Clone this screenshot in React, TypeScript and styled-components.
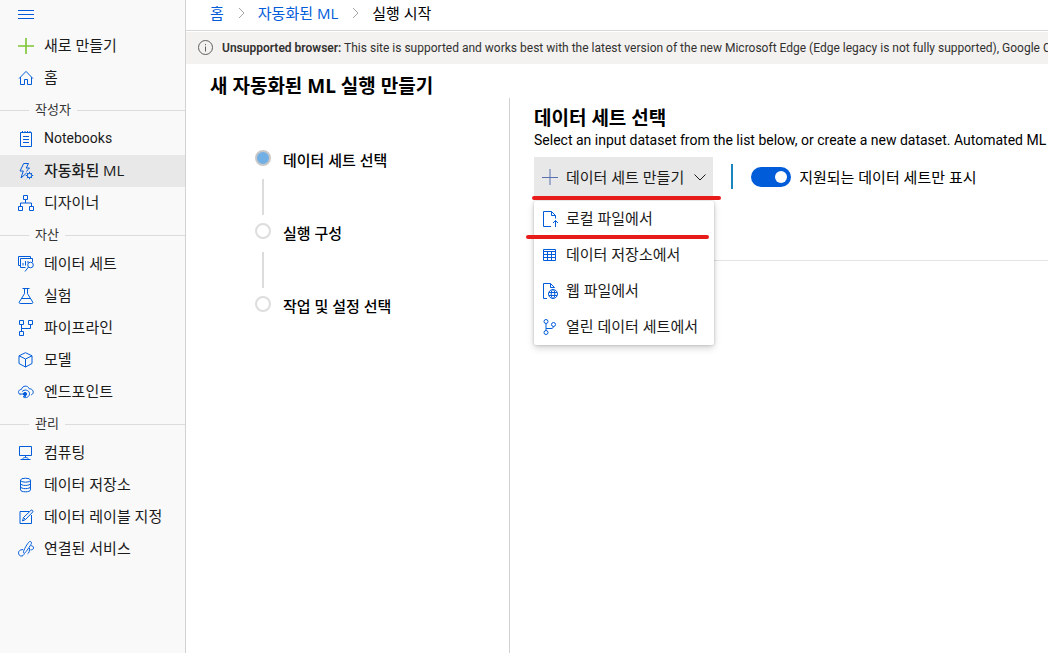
import React, { useState } from "react";
import styled, { createGlobalStyle } from "styled-components";

const blue = "#015cda";
const latinFont = `Roboto, "Open Sans", sans-serif`;

const GlobalStyle = createGlobalStyle`
  *, *::before, *::after { box-sizing: border-box; }
  body {
    margin: 0;
    background: #fff;
    color: #000;
    font-family: "Open Sans", "Noto Sans CJK KR", sans-serif;
    font-size: 15px;
    line-height: 20px;
  }
  button, input { font: inherit; }
`;

const Shell = styled.div`
  display: flex;
  min-height: 100vh;
`;

const Sidebar = styled.nav`
  flex: 0 0 186px;
  background: #f9f9f9;
  border-right: 1px solid #d2d2d2;
`;

const MenuToggle = styled.button`
  display: flex;
  align-items: center;
  width: 100%;
  height: 30px;
  padding: 0 18px;
  border: 0;
  background: none;
  color: ${blue};
`;

const NavList = styled.ul`
  list-style: none;
  margin: 0;
  padding: 0;
`;

const NavLink = styled.a<{ $active?: boolean; $latin?: boolean }>`
  display: flex;
  align-items: center;
  gap: 10px;
  height: 32px;
  padding: 0 18px;
  color: #1b1b1b;
  text-decoration: none;
  white-space: nowrap;
  background: ${(p) => (p.$active ? "#e8e8e8" : "transparent")};
  font-weight: ${(p) => (p.$active ? 500 : 400)};
  ${(p) => p.$latin && `font-family: ${latinFont}; font-size: 14px;`}
  svg { color: ${blue}; }
`;

const Label = styled.span`
  padding-bottom: 2px;
`;

const GroupTitle = styled.h2`
  display: flex;
  align-items: center;
  gap: 6px;
  height: 29px;
  margin: 0;
  padding-top: 4px;
  font-size: 13px;
  font-weight: 400;
  color: #333;
  &::before, &::after {
    content: "";
    height: 1px;
    background: #dcdcdc;
  }
  &::before { width: 29px; }
  &::after { flex: 1; }
  ${Label} { padding-bottom: 4px; }
`;

const Icon = styled.svg.attrs({ viewBox: "0 0 16 16", width: 16, height: 16, "aria-hidden": true })`
  flex: none;
  overflow: visible;
  fill: none;
  stroke: currentColor;
  stroke-width: 1;
`;

const Page = styled.div`
  flex: 1;
  min-width: 0;
  display: flex;
  flex-direction: column;
`;

const Breadcrumb = styled.nav`
  display: flex;
  align-items: center;
  gap: 9px;
  height: 31px;
  padding: 0 24px 4px;
  border-bottom: 1px solid #d6d6d6;
  svg { color: #a5a5a5; }
  a { color: ${blue}; text-decoration: none; }
`;

const Banner = styled.div`
  display: flex;
  align-items: center;
  gap: 8px;
  height: 32px;
  margin-top: 1px;
  padding-left: 12px;
  overflow: hidden;
  white-space: nowrap;
  background: #f3f2f1;
  color: #323130;
  font-family: ${latinFont};
  font-size: 12px;
  svg { color: #605e5c; }
  strong { font-weight: 600; }
`;

const PageTitle = styled.h1`
  margin: 0;
  padding: 10px 24px 0;
  font-size: 19px;
  line-height: 24px;
  font-weight: 700;
`;

const Body = styled.div`
  flex: 1;
  display: flex;
`;

const Steps = styled.ol`
  flex: 0 0 324px;
  list-style: none;
  margin: 0;
  padding: 52px 24px 0 69px;
  border-right: 1px solid #d2d2d2;
`;

const Step = styled.li`
  display: grid;
  grid-template-columns: 16px 1fr;
  column-gap: 12px;
  height: 73px;
  font-weight: 500;
`;

const StepTrack = styled.div`
  display: flex;
  flex-direction: column;
  align-items: center;
  gap: 13px;
`;

const StepDot = styled.span<{ $current?: boolean }>`
  width: 16px;
  height: 16px;
  border: 2px solid ${(p) => (p.$current ? "#c8c8c8" : "#dddddd")};
  border-radius: 50%;
  background: ${(p) => (p.$current ? "#71afe5" : "#fff")};
`;

const StepLine = styled.span`
  width: 2px;
  height: 36px;
  background: #dcdcdc;
`;

const Content = styled.main`
  flex: 1;
  min-width: 0;
  padding: 8px 0 0 24px;
  overflow: hidden;
`;

const SectionTitle = styled.h2`
  margin: 0;
  font-size: 19px;
  line-height: 24px;
  font-weight: 700;
`;

const Lead = styled.p`
  margin: 0;
  padding-bottom: 7px;
  font-family: ${latinFont};
  font-size: 14px;
  white-space: nowrap;
`;

const Toolbar = styled.div`
  display: flex;
  align-items: center;
  height: 104px;
  padding-bottom: 64px;
  border-bottom: 1px solid #e3e3e3;
  white-space: nowrap;
`;

const Dropdown = styled.div`
  position: relative;
`;

const CreateButton = styled.button`
  display: flex;
  align-items: center;
  gap: 8px;
  height: 40px;
  padding: 0 5px 0 8px;
  border: 0;
  background: #e8e8e8;
  color: #1b1b1b;
  white-space: nowrap;
`;

const PlusIcon = styled(Icon)`
  color: #5a6fae;
`;

const Menu = styled.ul`
  position: absolute;
  top: 44px;
  left: 0;
  width: 180px;
  margin: 0;
  padding: 0;
  list-style: none;
  background: #fff;
  border-radius: 2px;
  box-shadow: 0 3px 7px rgba(0, 0, 0, 0.18), 0 0 3px rgba(0, 0, 0, 0.2);
`;

const MenuItem = styled.button`
  display: flex;
  align-items: center;
  gap: 8px;
  width: 100%;
  height: 36px;
  padding: 0 8px;
  border: 0;
  background: none;
  color: #1b1b1b;
  white-space: nowrap;
  svg { color: ${blue}; }
`;

const Marker = styled.span<{ $top: number; $left: number; $width: number }>`
  position: absolute;
  top: ${(p) => p.$top}px;
  left: ${(p) => p.$left}px;
  width: ${(p) => p.$width}px;
  height: 4px;
  border-radius: 2px;
  background: #e81b1b;
`;

const Separator = styled.span`
  width: 2px;
  height: 25px;
  margin: 0 18px;
  background: #1a86bd;
`;

const SwitchLabel = styled.label`
  display: flex;
  align-items: center;
  gap: 8px;
`;

const Switch = styled.input`
  appearance: none;
  display: flex;
  align-items: center;
  width: 40px;
  height: 20px;
  margin: 0;
  padding: 0 4px;
  border-radius: 10px;
  background: #8a8886;
  &::before {
    content: "";
    width: 12px;
    height: 12px;
    border-radius: 50%;
    background: #fff;
  }
  &:checked { background: ${blue}; justify-content: flex-end; }
`;

const icons: Record<string, React.ReactNode> = {
  menu: <path d="M0 3.5h16M0 7.5h16M0 11.5h16" />,
  add: <path d="M8 0v16M0 8h16" stroke="#7cc534" strokeWidth="1.6" />,
  home: <path d="M1 8.6 8 1.4l7 7.2M2.5 7.2v7.3h4v-5h3v5h4V7.2" />,
  notebook: <path d="M2.5 1.5h11v14h-11zM4.5 0v2M7 0v2M9.5 0v2M12 0v2M5 5.5h6M5 8.5h6M5 11.5h6" />,
  automl: (
    <>
      <path d="M8.5 8.5 10 6.5 11.5 5H8.2l2.3-4.5H5.7L2 8h3.3L3 15l5.6-5" />
      <circle cx="11.5" cy="12.5" r="2.2" />
      <path d="M11.5 8.8v1.5M11.5 14.7v1.5M7.8 12.5h1.5M13.7 12.5h1.5M8.9 9.9l1 1M13.1 14.1l1 1M14.1 9.9l-1 1M9.9 14.1l-1 1" />
    </>
  ),
  designer: <path d="M5.5.5h4v4h-4zM.5 11.5h4v4h-4zM11.5 11.5h4v4h-4zM7.5 4.5v3.5M2.5 11.5v-3.5h11v3.5" />,
  dataset: (
    <>
      <path d="M2 9.5H.5v-9h12V2M7.500 11.500h-5v-9h12V6M5 9.500V7M7.500 9.500V5M10 7V5" />
      <circle cx="12.5" cy="9" r="2.8" />
      <path d="m10.500 11-3.500 4.500" />
    </>
  ),
  flask: <path d="M4.500.5h7M6.500.5v5.200L1.300 14c-.4.800 0 1.500.8 1.500h11.800c.8 0 1.200-.7.8-1.500L9.500 5.700V.5M3.700 10.500h8.600" />,
  pipeline: <path d="M1.500.5h4v4h-4zM10.500.5h4v4h-4zM1.500 11.500h4v4h-4zM3.500 4.500v7M3.500 8.500h9v-4" />,
  cube: <path d="M7.500.7 14 3.800v7.700l-6.500 3.500L1 11.500V3.800zM1 3.800l6.500 3.200L14 3.800M7.500 7v8" />,
  endpoint: (
    <>
      <path d="M2.500 10.700C-.7 9.200.3 5.500 3.400 5.500 4.300 1.300 10 1 11.200 4.800c4-.3 5.700 4.600 2 6.100" />
      <path d="M4 7.700c2-2.700 7.200-2 7.500 2 .1 3-3.600 4.900-6 3.400" />
      <circle cx="7" cy="10" r="1.600" fill="currentColor" />
      <path d="M1.500 10h5.500M5 12.700h3" />
    </>
  ),
  compute: <path d="M1.500 1.500h12v9h-12zM7.500 10.500v2M4.500 14.500c0-2.600 6-2.600 6 0zM2.500 14.500h10" />,
  database: (
    <>
      <ellipse cx="7.500" cy="3.200" rx="5" ry="2" />
      <path d="M2.500 3.200v9.600c0 2.700 10 2.700 10 0V3.200M2.500 6.400c0 2.700 10 2.700 10 0M2.500 9.600c0 2.700 10 2.700 10 0" />
    </>
  ),
  label: <path d="M11 2.500H2v12h11.500V6M4.500 12l1-3.500L13 1.300c1-.8 2.600.7 1.700 1.700l-7.200 7.500zM5.500 8.500l2 2" />,
  linked: (
    <path d="M5 8.500 2.500 9C-.3 10 0 14.300 2.800 15c1.700.3 3-.7 3.500-2.500M5.500 11.500C5 9.500 10 1.600 11.300.7c1.500-.6 2.800.5 2 2-1 2-5.500 8.600-6.500 9.400-.6.400-1.200 0-1.300-.6zM12.800 4.800c1.200-.3 2.800.5 2.700 2.200 0 1.400-1.500 2-3 1.800M9.500 13c1.500-.8 2.300-3.500 2-6" />
  ),
  upload: <path d="M9 15.500H1.500V.5h8l4 4v3M9.500.5v4h4M13.500 16V9.500M11 12l2.500-2.500L16 12" />,
  table: <path d="M1.500 2.500h12v11h-12zM1.500 4.500h12M1.500 7.500h12M1.500 10.500h12M5.500 4.500v9M9.500 4.500v9" />,
  webfile: (
    <>
      <path d="M5 15.500H1.500V.5h7l4 4M8.500.5v4h4" />
      <circle cx="11" cy="11" r="4.500" />
      <ellipse cx="11" cy="11" rx="1.800" ry="4.500" />
      <path d="M7 9.500h8M7 12.500h8" />
    </>
  ),
  branch: (
    <>
      <circle cx="4" cy="2.500" r="2" />
      <circle cx="4" cy="13.500" r="2" />
      <circle cx="11.500" cy="5.500" r="2" />
      <path d="M4 4.500v7M4 9.500h5c1.700 0 2.500-.8 2.500-2" />
    </>
  ),
};

type Item = { icon: string; text: string; active?: boolean; latin?: boolean };

const groups: { title?: string; items: Item[] }[] = [
  { items: [{ icon: "add", text: "새로 만들기" }, { icon: "home", text: "홈" }] },
  {
    title: "작성자",
    items: [
      { icon: "notebook", text: "Notebooks", latin: true },
      { icon: "automl", text: "자동화된 ML", active: true },
      { icon: "designer", text: "디자이너" },
    ],
  },
  {
    title: "자산",
    items: [
      { icon: "dataset", text: "데이터 세트" },
      { icon: "flask", text: "실험" },
      { icon: "pipeline", text: "파이프라인" },
      { icon: "cube", text: "모델" },
      { icon: "endpoint", text: "엔드포인트" },
    ],
  },
  {
    title: "관리",
    items: [
      { icon: "compute", text: "컴퓨팅" },
      { icon: "database", text: "데이터 저장소" },
      { icon: "label", text: "데이터 레이블 지정" },
      { icon: "linked", text: "연결된 서비스" },
    ],
  },
];

const steps = ["데이터 세트 선택", "실행 구성", "작업 및 설정 선택"];

const sources: Item[] = [
  { icon: "upload", text: "로컬 파일에서" },
  { icon: "table", text: "데이터 저장소에서" },
  { icon: "webfile", text: "웹 파일에서" },
  { icon: "branch", text: "열린 데이터 세트에서" },
];

const Chevron = () => (
  <Icon>
    <path d="m6 3 5 5-5 5" />
  </Icon>
);

export default function App() {
  const [supportedOnly, setSupportedOnly] = useState(true);
  return (
    <>
      <GlobalStyle />
      <Shell>
        <Sidebar>
          <MenuToggle aria-label="메뉴">
            <Icon>{icons.menu}</Icon>
          </MenuToggle>
          {groups.map((group, i) => (
            <React.Fragment key={i}>
              {group.title && (
                <GroupTitle>
                  <Label>{group.title}</Label>
                </GroupTitle>
              )}
              <NavList>
                {group.items.map((item) => (
                  <li key={item.text}>
                    <NavLink href="#" $active={item.active} $latin={item.latin}>
                      <Icon>{icons[item.icon]}</Icon>
                      <Label>{item.text}</Label>
                    </NavLink>
                  </li>
                ))}
              </NavList>
            </React.Fragment>
          ))}
        </Sidebar>
        <Page>
          <Breadcrumb>
            <a href="#">홈</a>
            <Chevron />
            <a href="#">자동화된 ML</a>
            <Chevron />
            <span>실행 시작</span>
          </Breadcrumb>
          <Banner>
            <Icon>
              <circle cx="7.500" cy="7.500" r="7" />
              <path d="M7.500 6.500v5M7.500 4v1.200" />
            </Icon>
            <span>
              <strong>Unsupported browser:</strong> This site is supported and works best with the latest version of the
              new Microsoft Edge (Edge legacy is not fully supported), Google C
            </span>
          </Banner>
          <PageTitle>새 자동화된 ML 실행 만들기</PageTitle>
          <Body>
            <Steps>
              {steps.map((step, i) => (
                <Step key={step}>
                  <StepTrack>
                    <StepDot $current={i === 0} />
                    {i < steps.length - 1 && <StepLine />}
                  </StepTrack>
                  <span>{step}</span>
                </Step>
              ))}
            </Steps>
            <Content>
              <SectionTitle>데이터 세트 선택</SectionTitle>
              <Lead>Select an input dataset from the list below, or create a new dataset. Automated ML</Lead>
              <Toolbar>
                <Dropdown>
                  <CreateButton aria-haspopup="menu" aria-expanded="true">
                    <PlusIcon>
                      <path d="M8 0v16M0 8.500h16" />
                    </PlusIcon>
                    데이터 세트 만들기
                    <Icon>
                      <path d="m2.500 5.500 5.500 5.500 5.500-5.500" />
                    </Icon>
                  </CreateButton>
                  <Menu>
                    {sources.map((source) => (
                      <li key={source.text}>
                        <MenuItem>
                          <Icon>{icons[source.icon]}</Icon>
                          <Label>{source.text}</Label>
                        </MenuItem>
                      </li>
                    ))}
                  </Menu>
                  <Marker $top={39} $left={-2} $width={189} />
                  <Marker $top={78} $left={-8} $width={183} />
                </Dropdown>
                <Separator />
                <SwitchLabel>
                  <Switch
                    type="checkbox"
                    role="switch"
                    checked={supportedOnly}
                    onChange={(e) => setSupportedOnly(e.target.checked)}
                  />
                  지원되는 데이터 세트만 표시
                </SwitchLabel>
              </Toolbar>
            </Content>
          </Body>
        </Page>
      </Shell>
    </>
  );
}
